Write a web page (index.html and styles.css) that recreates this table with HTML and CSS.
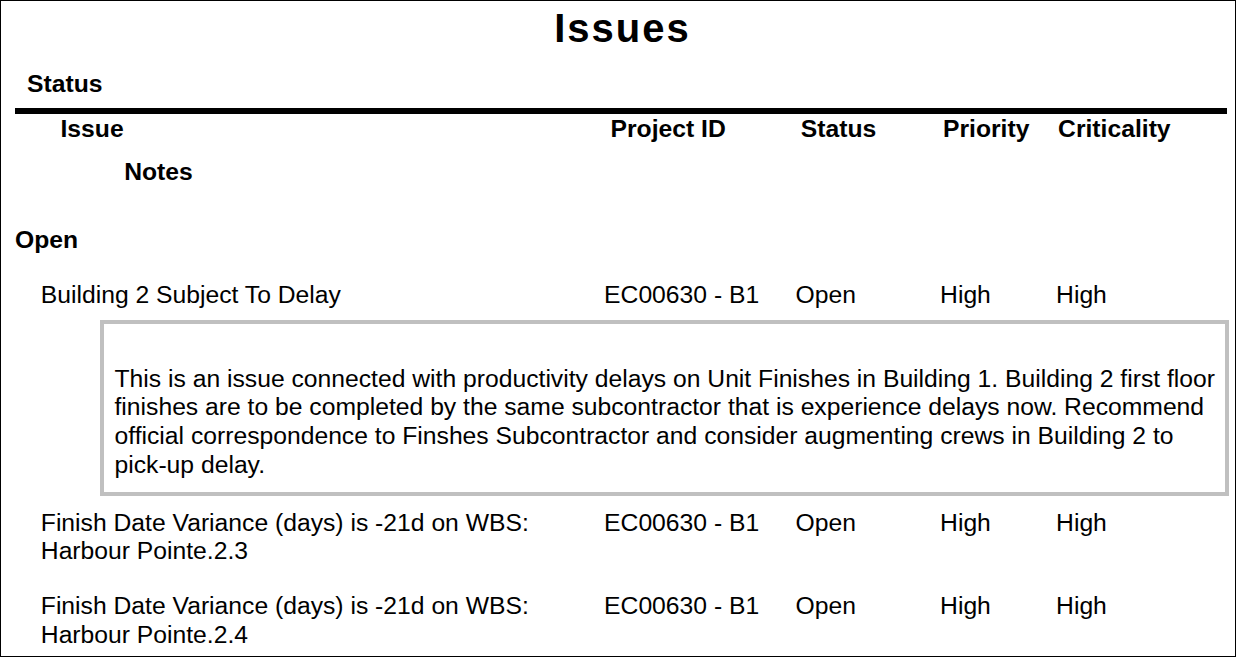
FILE: index.html
```html
<!DOCTYPE html>
<html>
<head>
<meta charset="utf-8">
<title>Issues</title>
<link rel="stylesheet" href="styles.css">
</head>
<body>
<div class="page">
  <h1 class="title">Issues</h1>
  <div class="group-label">Status</div>
  <div class="rule"></div>
  <div class="cols head">
    <div class="h-issue">Issue</div>
    <div class="h-proj">Project ID</div>
    <div class="h-status">Status</div>
    <div class="h-prio">Priority</div>
    <div class="h-crit">Criticality</div>
  </div>
  <div class="h-notes">Notes</div>

  <div class="group">Open</div>

  <div class="cols row first">
    <div>Building 2 Subject To Delay</div>
    <div>EC00630 - B1</div>
    <div>Open</div>
    <div>High</div>
    <div>High</div>
  </div>
  <div class="notes">This is an issue connected with productivity delays on Unit Finishes in Building 1. Building 2 first floor finishes are to be completed by the same subcontractor that is experience delays now. Recommend official correspondence to Finshes Subcontractor and consider augmenting crews in Building 2 to pick-up delay.</div>

  <div class="cols row after-notes">
    <div>Finish Date Variance (days) is -21d on WBS: Harbour Pointe.2.3</div>
    <div>EC00630 - B1</div>
    <div>Open</div>
    <div>High</div>
    <div>High</div>
  </div>

  <div class="cols row">
    <div>Finish Date Variance (days) is -21d on WBS: Harbour Pointe.2.4</div>
    <div>EC00630 - B1</div>
    <div>Open</div>
    <div>High</div>
    <div>High</div>
  </div>
</div>
</body>
</html>
```

FILE: styles.css
```css
* {
  box-sizing: border-box;
}

html, body {
  margin: 0;
  padding: 0;
  background: #ffffff;
}

.page {
  width: 1236px;
  height: 657px;
  border: 1px solid #000000;
  overflow: hidden;
  font-family: "Liberation Sans", Arial, sans-serif;
  font-size: 24.7px;
  line-height: 28.7px;
  color: #000000;
}

.title {
  margin: 3.5px 0 0 0;
  padding-left: 9px;
  font-size: 40px;
  line-height: 46px;
  font-weight: bold;
  letter-spacing: 2px;
  text-align: center;
}

.group-label {
  margin: 19px 0 0 26px;
  font-weight: bold;
}

.rule {
  margin: 9.8px 8px 0 14px;
  height: 6px;
  background: #000000;
}

.cols {
  display: grid;
  grid-template-columns: 563.3px 191.4px 144.6px 116px 1fr;
  padding-left: 39.8px;
}

.head {
  margin-top: 0.5px;
  font-weight: bold;
}

.h-issue { padding-left: 19.7px; }
.h-proj { padding-left: 6.4px; }
.h-status { padding-left: 5.3px; }
.h-prio { padding-left: 2.9px; }
.h-crit { padding-left: 2px; }

.h-notes {
  margin: 14.5px 0 0 123.2px;
  font-weight: bold;
}

.group {
  margin: 39.8px 0 0 14px;
  font-weight: bold;
}

.row {
  margin-top: 26px;
}

.row.first {
  margin-top: 25.6px;
}

.row.after-notes {
  margin-top: 12.5px;
}

.notes {
  margin: 10.8px 6px 0 99px;
  border: 4px solid #c0c0c0;
  padding: 40.5px 8px 12.7px 10.5px;
}
```
